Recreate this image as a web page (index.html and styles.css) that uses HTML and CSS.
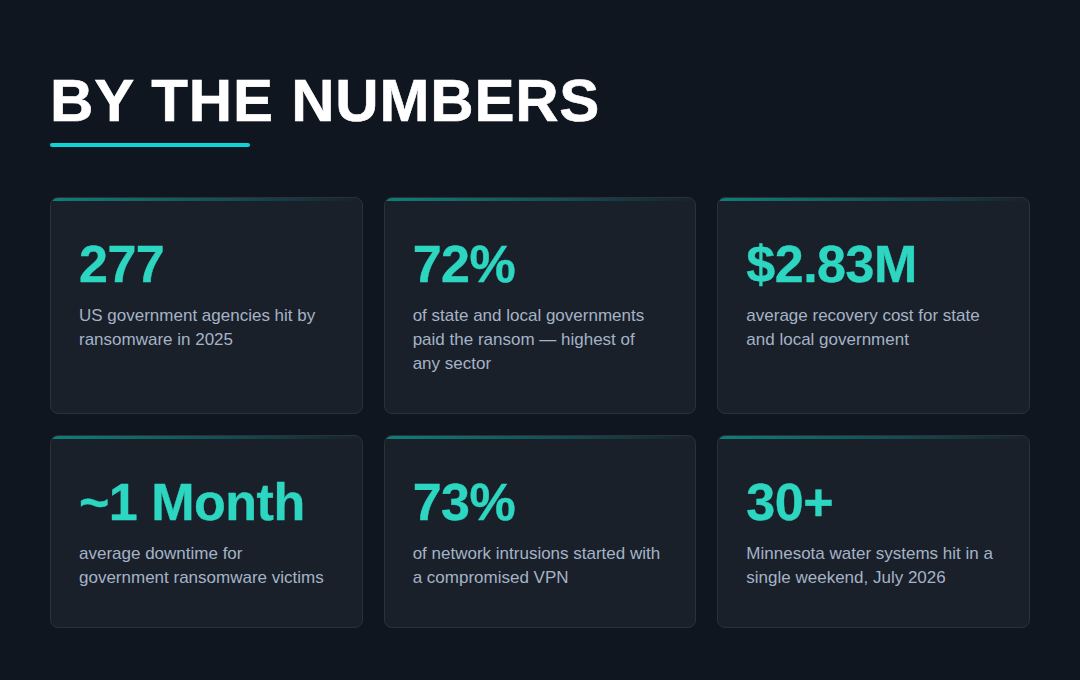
FILE: index.html
```html
<!DOCTYPE html>
<html lang="en">
<head>
<meta charset="utf-8">
<title>By the Numbers</title>
<link rel="stylesheet" href="styles.css">
</head>
<body>
<main class="page">
  <header class="header">
    <h1 class="title">BY THE NUMBERS</h1>
    <div class="rule"></div>
  </header>
  <section class="grid">
    <article class="card">
      <div class="num">277</div>
      <p class="desc">US government agencies hit by ransomware in 2025</p>
    </article>
    <article class="card">
      <div class="num">72%</div>
      <p class="desc">of state and local governments paid the ransom — highest of any sector</p>
    </article>
    <article class="card">
      <div class="num">$2.83M</div>
      <p class="desc">average recovery cost for state and local government</p>
    </article>
    <article class="card">
      <div class="num">~1 Month</div>
      <p class="desc">average downtime for government ransomware victims</p>
    </article>
    <article class="card">
      <div class="num">73%</div>
      <p class="desc">of network intrusions started with a compromised VPN</p>
    </article>
    <article class="card">
      <div class="num">30+</div>
      <p class="desc">Minnesota water systems hit in a single weekend, July 2026</p>
    </article>
  </section>
</main>
</body>
</html>
```

FILE: styles.css
```css
* { box-sizing: border-box; }
html, body {
  margin: 0;
  padding: 0;
  background: #0f161f;
}
body {
  font-family: "Liberation Sans", Arial, Helvetica, sans-serif;
  color: #ffffff;
  width: 1080px;
  height: 680px;
  overflow: hidden;
}
.page {
  padding: 71px 50px 0 50px;
}
.header {
  display: flex;
  flex-direction: column;
  align-items: flex-start;
}
.title {
  margin: 0;
  font-size: 60px;
  line-height: 60px;
  font-weight: 700;
  letter-spacing: 0.8px;
  color: #ffffff;
  -webkit-text-stroke: 0.6px #ffffff;
}
.rule {
  margin-top: 12px;
  width: 200px;
  height: 4px;
  border-radius: 2px;
  background: #0fd3d6;
}
.grid {
  margin-top: 50px;
  display: grid;
  grid-template-columns: repeat(3, 1fr);
  gap: 21px;
}
.card {
  position: relative;
  overflow: hidden;
  background: #19202a;
  border: 1px solid #29313c;
  border-radius: 8px;
  padding: 40px 32px 37px 28px;
}
.card::before {
  content: "";
  position: absolute;
  left: 0;
  top: 0;
  right: 0;
  height: 3px;
  background: linear-gradient(90deg, #0f7f78 0%, rgba(18, 110, 108, 0.55) 60%, rgba(25, 32, 42, 0) 100%);
}
.num {
  font-size: 52px;
  line-height: 52px;
  font-weight: 700;
  letter-spacing: -0.5px;
  color: #2dd6c1;
  -webkit-text-stroke: 0.4px #2dd6c1;
}
.desc {
  margin: 14px 0 0 0;
  font-size: 17px;
  line-height: 24px;
  color: #a5b3c6;
}
```
